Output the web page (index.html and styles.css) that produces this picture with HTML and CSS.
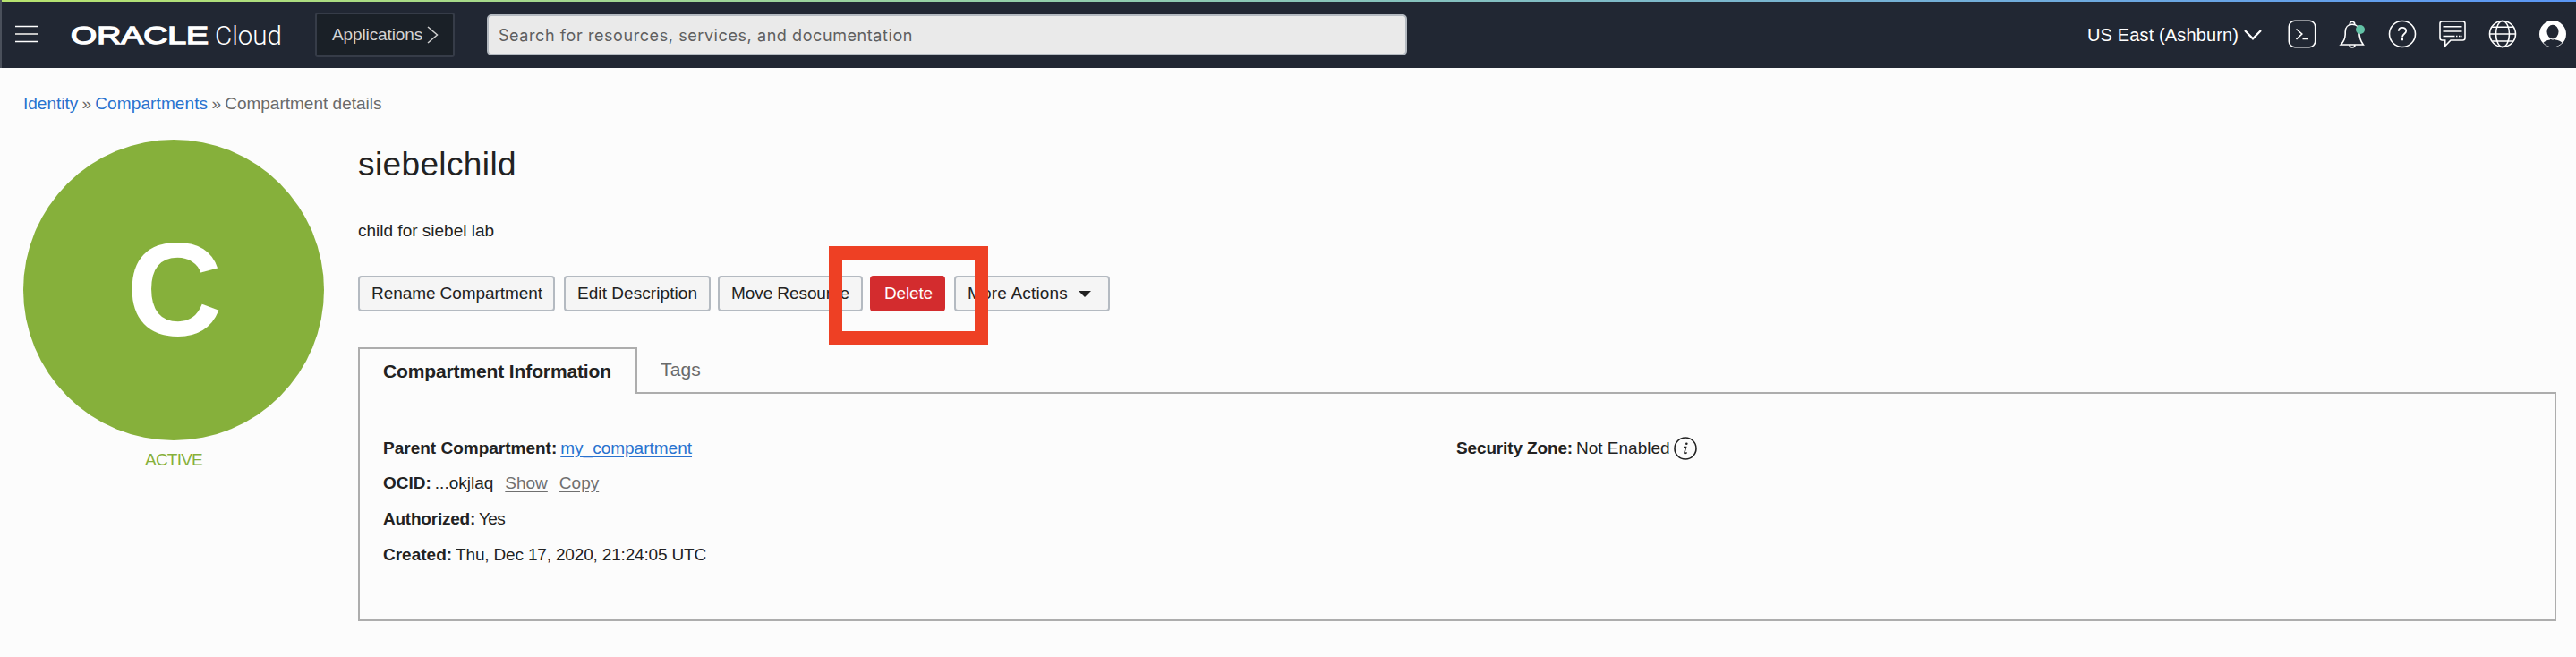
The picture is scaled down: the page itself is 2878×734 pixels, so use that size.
FILE: index.html
```html
<!DOCTYPE html>
<html lang="en">
<head>
<meta charset="utf-8">
<title>Compartment details</title>
<link rel="stylesheet" href="styles.css">
</head>
<body>
<header class="topbar">
  <svg class="menu" width="26" height="20" viewBox="0 0 26 20"><path d="M0 1.5h26M0 18.5h26" stroke="#fff" stroke-width="1.3"/><path d="M0 10h26" stroke="#c4c4c4" stroke-width="2"/></svg>
  <svg class="logo" width="240" height="36" viewBox="0 0 240 36">
    <text class="logo-oracle" x="0" y="28.500" textLength="154" lengthAdjust="spacingAndGlyphs">ORACLE</text>
    <text class="logo-cloud" x="161" y="29.500" textLength="75" lengthAdjust="spacingAndGlyphs">Cloud</text>
  </svg>
  <div class="apps"><span class="t-apps">Applications</span><svg width="13" height="20" viewBox="0 0 13 20"><path d="M1 1l10.500 9L1 19" fill="none" stroke="#d0d0d0" stroke-width="1.500"/></svg></div>
  <div class="search"><span class="t-search">Search for resources, services, and documentation</span></div>
  <div class="region"><span class="t-region">US East (Ashburn)</span><svg width="20" height="12" viewBox="0 0 20 12"><path d="M1 1l9 9.300L19 1" fill="none" stroke="#fff" stroke-width="2.200"/></svg></div>
  <nav class="icons">
    <svg width="32" height="32" viewBox="0 0 32 32"><rect x="1.300" y="1.300" width="29.400" height="29.400" rx="6.500"/><path d="M9.500 10.500l6.300 5.500-6.300 6M16.500 21.500h6.500"/></svg>
    <svg width="32" height="32" viewBox="0 0 32 32"><path d="M13.300 5a2.700 2.700 0 1 1 5.400 0M3.200 28c3-3 4.800-7 5-11.500v-3c0-5 3.200-8.200 7.800-8.200s7.800 3.200 7.800 8.200c0 6 1.500 10.500 4.500 14.500zM13 28a3 3 0 0 0 6 0"/><circle class="dot" cx="25" cy="11" r="5"/></svg>
    <svg width="32" height="32" viewBox="0 0 32 32"><circle cx="16" cy="16" r="14.500"/><path d="M11.800 12.800c0-5.200 8.400-5.200 8.400-.3 0 3.300-4.200 3.200-4.200 7" stroke-width="1.800"/><path d="M16 21v2.300" stroke-width="2"/></svg>
    <svg width="32" height="32" viewBox="0 0 32 32"><path d="M4.500 2h23a2.500 2.500 0 0 1 2.500 2.500v16a2.500 2.500 0 0 1-2.500 2.500H14l-6.300 6.500V23H4.500A2.500 2.500 0 0 1 2 20.500v-16A2.500 2.500 0 0 1 4.500 2z"/><path d="M5.500 7.800h21M5.500 13h21M5.500 18.500h13M20 18.500h1.500M23 18.500h1.500M25.500 18.500h1"/></svg>
    <svg width="32" height="32" viewBox="0 0 32 32"><circle cx="16" cy="16" r="14.500"/><ellipse cx="16" cy="16" rx="7.500" ry="14.500"/><path d="M1.500 16h29M4.200 8.200h23.600M4.200 24h23.600"/></svg>
    <svg width="32" height="32" viewBox="0 0 32 32"><circle class="solid" cx="16" cy="16" r="15"/><ellipse class="hole" cx="16" cy="13.500" rx="6.500" ry="7.800"/><path class="hole" d="M13 20.500q3 1.800 6 0v2q5.500 1 7.500 3.200a14.200 14.200 0 0 1-21 0q2-2.200 7.500-3.200z"/><path d="M13 21.200q3 1.800 6 0" stroke-width="1"/></svg>
  </nav>
</header>
<main>
  <div class="crumbs"><a class="t-c1">Identity</a><span class="sep">»</span><a class="t-c2">Compartments</a><span class="sep">»</span><span>Compartment details</span></div>
  <div class="content">
    <aside class="status">
      <div class="badge">C</div>
      <div class="state"><span class="t-state">ACTIVE</span></div>
    </aside>
    <section class="details">
      <h1><span class="t-h1">siebelchild</span></h1>
      <p class="desc">child for siebel lab</p>
      <div class="actions">
        <button class="b1"><span class="t-b1">Rename Compartment</span></button>
        <button class="b2"><span class="t-b2">Edit Description</span></button>
        <button class="b3"><span class="t-b3">Move Resource</span></button>
        <button class="b4"><span class="t-b4">Delete</span></button>
        <button class="b5"><span class="t-b5">More Actions</span><svg width="14" height="7" viewBox="0 0 14 7"><path d="M0 0h14L7 7z" fill="#222"/></svg></button>
        <div class="highlight"></div>
      </div>
      <div class="tabs">
        <div class="tab active"><span class="t-tab">Compartment Information</span></div>
        <div class="tab"><span class="t-tags">Tags</span></div>
      </div>
      <div class="panel">
        <dl class="fields">
          <div><dt>Parent Compartment:</dt><dd><a class="link">my_compartment</a></dd></div>
          <div><dt>OCID:</dt><dd><span>...okjlaq</span><a class="muted">Show</a><a class="muted">Copy</a></dd></div>
          <div><dt class="t-l3">Authorized:</dt><dd><span class="t-v3">Yes</span></dd></div>
          <div><dt>Created:</dt><dd><span class="t-v4">Thu, Dec 17, 2020, 21:24:05 UTC</span></dd></div>
        </dl>
        <dl class="fields">
          <div><dt class="t-l5">Security Zone:</dt><dd><span>Not Enabled</span><svg class="info" width="26" height="26" viewBox="0 0 26 26"><circle cx="13" cy="13" r="12" fill="none" stroke="#222" stroke-width="1.600"/><circle cx="14.300" cy="7.800" r="1.300" fill="#222"/><path d="M11 11.500h2.600l-1.700 6.300q-.2 1 1 .7l1.800-.9" fill="none" stroke="#222" stroke-width="1.500"/></svg></dd></div>
        </dl>
      </div>
    </section>
  </div>
</main>
</body>
</html>
```
FILE: styles.css
```css
* { box-sizing: border-box; }
body {
  margin: 0;
  height: 734px;
  overflow: hidden;
  background: #fcfcfc;
  color: #222;
  font: 19px/24px "Liberation Sans", Arial, sans-serif;
}
span, a, dt { white-space: nowrap; }
svg { display: block; flex: none; }

.topbar {
  display: flex;
  align-items: flex-start;
  height: 76px;
  border-left: 2px solid #4a505b;
  background: linear-gradient(90deg, #b7e36f, #93cfaa 40%, #74b0d8 75%, #5a96f5) 0 0 / 100% 2px no-repeat, #212733;
}
.menu { margin: 28px 0 0 15px; }
.logo { margin: 20px 0 0 36px; }
.logo text { fill: #fff; }
.logo-oracle { font: 28px "Liberation Sans", Arial, sans-serif; stroke: #fff; stroke-width: 1.400px; }
.logo-cloud { font: 300 30px Roboto, sans-serif; }
.apps {
  display: flex;
  align-items: center;
  justify-content: space-between;
  width: 156px;
  height: 50px;
  margin: 14px 0 0 33px;
  padding: 0 16px 0 17px;
  border: 2px solid #363c48;
  border-radius: 3px;
  background: #1a2027;
  color: #d4d4d4;
}
.search {
  width: 1028px;
  height: 46px;
  margin: 16px 0 0 36px;
  padding: 10px 11px;
  border: 2px solid #b4bac1;
  border-radius: 5px;
  background: #eaeaea;
  color: #5f5f5f;
  font-family: Inter, Roboto, sans-serif;
  font-size: 18px;
}
.region {
  display: flex;
  align-items: center;
  gap: 6px;
  height: 76px;
  margin-left: auto;
  padding-top: 2px;
  color: #fff;
  font-size: 20px;
}
.icons { display: flex; gap: 24px; margin: 22px 10px 0 29px; }
.icons svg { fill: none; stroke: #fff; stroke-width: 1.600; }
.icons .dot { fill: #62c2a6; stroke: none; }
.icons .solid { fill: #fff; stroke: none; }
.icons .hole { fill: #212733; stroke: none; }

.crumbs { display: flex; height: 80px; padding: 28px 0 0 26px; color: #6a6a6a; }
.crumbs a { color: #2872cf; }
.sep { width: 19px; text-align: center; }

.content { display: flex; padding: 0 22px 0 26px; }
.status { width: 336px; margin-right: 38px; }
.badge {
  height: 336px;
  padding-left: 2px;
  border-radius: 50%;
  background: #86b03b;
  color: #fff;
  font-weight: bold;
  font-size: 148px;
  line-height: 336px;
  text-align: center;
}
.state { padding-top: 10px; color: #86b03b; text-align: center; }
.details { flex: 1; }
h1 { height: 89px; margin: 0; padding-top: 7px; font-weight: 400; font-size: 37px; line-height: 41px; }
.desc { height: 63px; margin: 0; padding-top: 1px; }
.actions { position: relative; display: flex; height: 80px; }
button {
  display: flex;
  align-items: center;
  height: 40px;
  margin: 0 8px 0 0;
  padding: 0 0 0 13px;
  border: 2px solid #b4bac1;
  border-radius: 4px;
  background: #f5f5f5;
  color: #222;
  font: inherit;
}
.b1 { width: 220px; margin-right: 10px; }
.b2 { width: 164px; }
.b3 { width: 162px; }
.b4 { width: 84px; margin-right: 10px; padding-left: 14px; border-color: #d32c2e; background: #d32c2e; color: #fff; }
.b5 { width: 174px; gap: 12px; }
.highlight {
  position: absolute;
  left: 526px;
  top: -33px;
  width: 178px;
  height: 110px;
  border: 15px solid #ee4024;
}
.tabs { display: flex; height: 50px; }
.tab { padding: 12px 0 0 26px; color: #6a6a6a; font-size: 21px; line-height: 26px; }
.tab.active {
  z-index: 1;
  width: 312px;
  height: 52px;
  border: 2px solid #adadad;
  border-bottom: 0;
  background: #fcfcfc;
  color: #222;
  font-weight: bold;
}
.panel { display: flex; height: 256px; padding: 49px 26px 0; border: 2px solid #adadad; }
.fields { width: 1199px; margin: 0; }
.fields div { display: flex; height: 40px; }
.fields div:first-child { height: 39px; }
dt { margin-right: 4px; font-weight: bold; }
dd { display: flex; margin: 0; }
.link { color: #2872cf; text-decoration: underline; text-decoration-thickness: 2px; text-underline-offset: 2px; }
.muted { margin-left: 13px; color: #707070; text-decoration: underline; text-decoration-thickness: 2px; text-underline-offset: 2px; }
.info { margin: -1px 0 0 4px; }

/* Tracking */
.t-apps { letter-spacing: -0.120px; }
.t-search { letter-spacing: 0.576px; }
.t-region { letter-spacing: 0.130px; }
.t-c2 { letter-spacing: 0.110px; }
.t-state { letter-spacing: -0.770px; }
.t-h1 { letter-spacing: 0.380px; }
.t-b1 { letter-spacing: -0.070px; }
.t-b2 { letter-spacing: 0.060px; }
.t-b3 { letter-spacing: -0.080px; }
.t-b4 { letter-spacing: -0.150px; }
.t-b5 { letter-spacing: 0.180px; }
.t-tab { letter-spacing: -0.124px; }
.t-tags { letter-spacing: 0.160px; }
.t-l3 { letter-spacing: -0.230px; }
.t-v3 { letter-spacing: -0.660px; }
.t-v4 { letter-spacing: -0.167px; }
.t-l5 { letter-spacing: -0.140px; }
```
